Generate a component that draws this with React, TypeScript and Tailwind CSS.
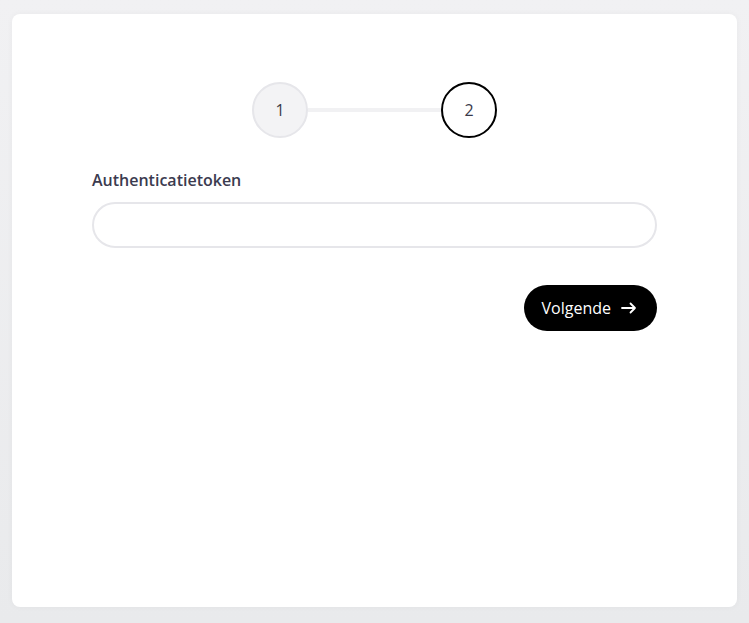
import React from 'react';

const Step = ({ n, active }: { n: number; active?: boolean }) => (
  <div
    className={`flex h-14 w-14 shrink-0 items-center justify-center rounded-full border-2 text-base ${
      active ? 'border-black bg-white text-[#3a3a4a]' : 'border-[#e6e6ea] bg-[#f3f3f5] text-[#3a3a4a]'
    }`}
  >
    {n}
  </div>
);

export default function App() {
  return (
    <div
      className="min-h-[623px] w-full bg-gradient-to-b from-[#f1f1f3] to-[#e9eaec] px-3 pt-[14px] pb-4"
      style={{ fontFamily: '"Open Sans", "Noto Sans", sans-serif' }}
    >
      <div className="h-[593px] rounded-lg bg-white px-20 pt-[68px] shadow-[0_0_6px_rgba(0,0,0,0.04)]">
        {/* Stepper */}
        <div className="flex items-center justify-center">
          <Step n={1} />
          <div className="h-1 w-[133px] bg-[#f1f1f3]" />
          <Step n={2} active />
        </div>

        {/* Token field */}
        <div className="mt-[30px]">
          <label className="block text-base leading-6 font-semibold text-[#3b3b4f]">Authenticatietoken</label>
          <input
            type="text"
            className="mt-[10px] block h-[46px] w-full rounded-full border-2 border-[#e6e6ea] bg-white px-5 outline-none"
          />
        </div>

        <div className="mt-[37px] flex justify-end">
          <button className="flex h-[46px] items-center gap-[10px] rounded-full bg-black pl-[18px] pr-5 text-[16px] text-white">
            Volgende
            <svg width="16" height="12" viewBox="0 0 16 12" fill="none" stroke="white" strokeWidth="1.8" strokeLinecap="round" strokeLinejoin="round">
              <path d="M1 6h13M9.5 1.5 14 6l-4.5 4.5" />
            </svg>
          </button>
        </div>
      </div>
    </div>
  );
}
